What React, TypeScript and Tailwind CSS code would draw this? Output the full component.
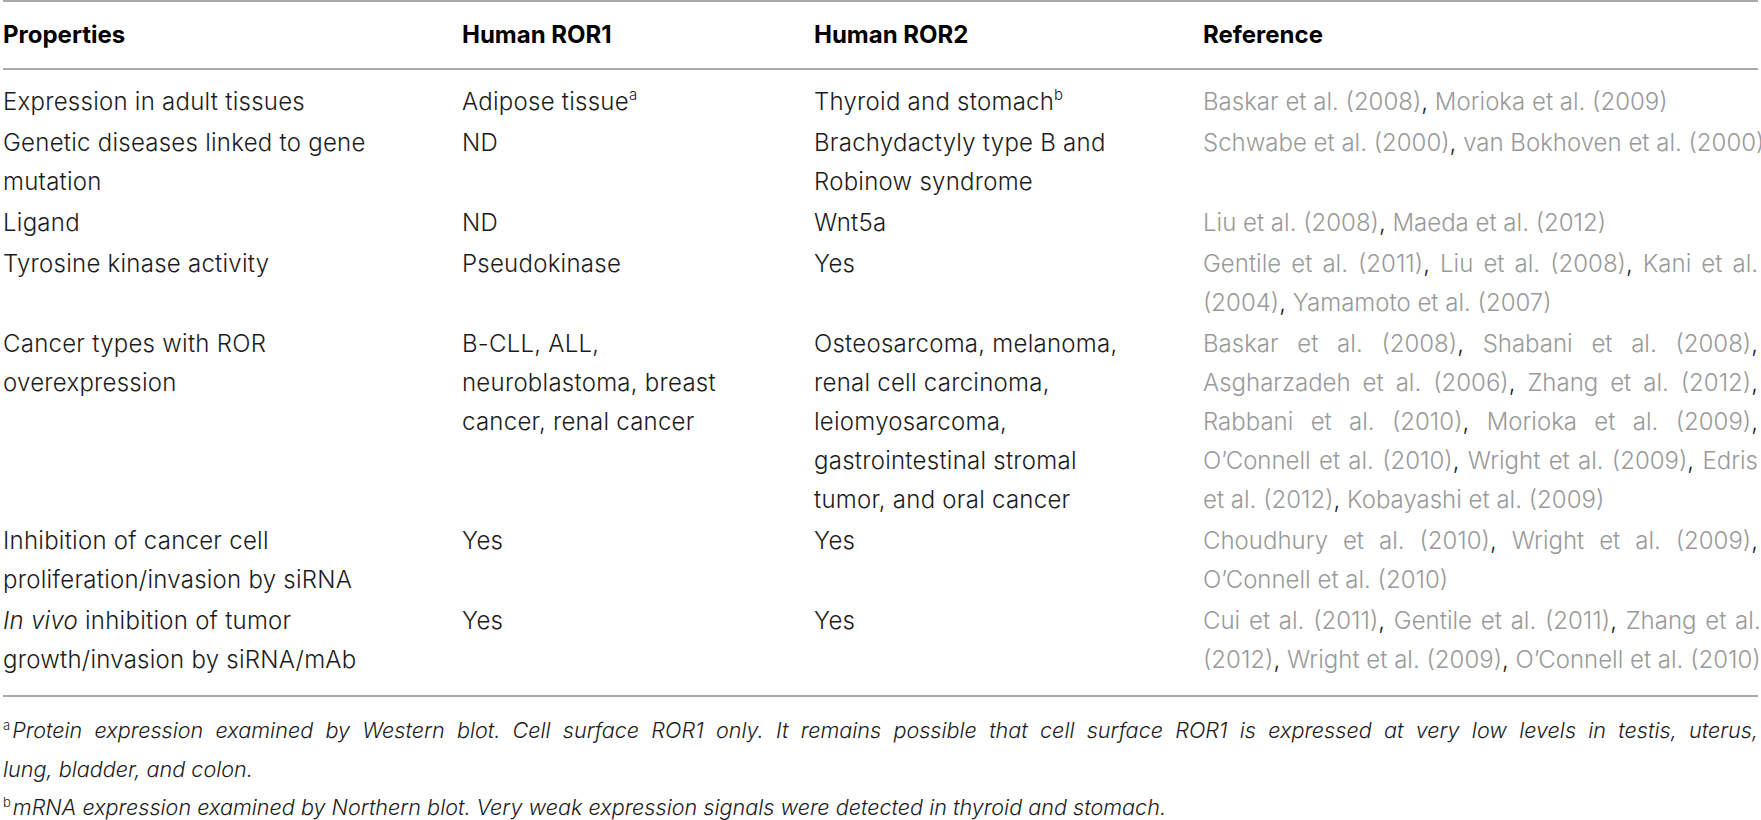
import type { ReactNode } from "react";

type RefLine = { text: string; justify?: boolean };

type Row = {
  property: ReactNode[];
  ror1: ReactNode[];
  ror2: ReactNode[];
  refs: RefLine[];
};

function Sup({ children }: { children: ReactNode }) {
  return <span className="relative -top-[10px] text-[15px] leading-none">{children}</span>;
}

const rows: Row[] = [
  {
    property: ["Expression in adult tissues"],
    ror1: [
      <>
        Adipose tissue<Sup>a</Sup>
      </>,
    ],
    ror2: [
      <>
        Thyroid and stomach<Sup>b</Sup>
      </>,
    ],
    refs: [{ text: "Baskar et al. (2008), Morioka et al. (2009)" }],
  },
  {
    property: ["Genetic diseases linked to gene", "mutation"],
    ror1: ["ND"],
    ror2: ["Brachydactyly type B and", "Robinow syndrome"],
    refs: [{ text: "Schwabe et al. (2000), van Bokhoven et al. (2000)", justify: true }],
  },
  {
    property: ["Ligand"],
    ror1: ["ND"],
    ror2: ["Wnt5a"],
    refs: [{ text: "Liu et al. (2008), Maeda et al. (2012)" }],
  },
  {
    property: ["Tyrosine kinase activity"],
    ror1: ["Pseudokinase"],
    ror2: ["Yes"],
    refs: [
      { text: "Gentile et al. (2011), Liu et al. (2008), Kani et al.", justify: true },
      { text: "(2004), Yamamoto et al. (2007)" },
    ],
  },
  {
    property: ["Cancer types with ROR", "overexpression"],
    ror1: ["B-CLL, ALL,", "neuroblastoma, breast", "cancer, renal cancer"],
    ror2: [
      "Osteosarcoma, melanoma,",
      "renal cell carcinoma,",
      "leiomyosarcoma,",
      "gastrointestinal stromal",
      "tumor, and oral cancer",
    ],
    refs: [
      { text: "Baskar et al. (2008), Shabani et al. (2008),", justify: true },
      { text: "Asgharzadeh et al. (2006), Zhang et al. (2012),", justify: true },
      { text: "Rabbani et al. (2010), Morioka et al. (2009),", justify: true },
      { text: "O\u2019Connell et al. (2010), Wright et al. (2009), Edris", justify: true },
      { text: "et al. (2012), Kobayashi et al. (2009)" },
    ],
  },
  {
    property: ["Inhibition of cancer cell", "proliferation/invasion by siRNA"],
    ror1: ["Yes"],
    ror2: ["Yes"],
    refs: [
      { text: "Choudhury et al. (2010), Wright et al. (2009),", justify: true },
      { text: "O\u2019Connell et al. (2010)" },
    ],
  },
  {
    property: [
      <>
        <i>In vivo</i> inhibition of tumor
      </>,
      "growth/invasion by siRNA/mAb",
    ],
    ror1: ["Yes"],
    ror2: ["Yes"],
    refs: [
      { text: "Cui et al. (2011), Gentile et al. (2011), Zhang et al.", justify: true },
      { text: "(2012), Wright et al. (2009), O\u2019Connell et al. (2010)", justify: true },
    ],
  },
];

function Lines({ lines }: { lines: ReactNode[] }) {
  return (
    <div className="tracking-[0.25px]">
      {lines.map((line, i) => (
        <div key={i} className="whitespace-nowrap">
          {line}
        </div>
      ))}
    </div>
  );
}

function RefText({ text }: { text: string }) {
  const parts = text.split(",");
  return (
    <>
      {parts.map((part, i) => (
        <span key={i}>
          {i > 0 && <span className="text-[#1c1c1c]">,</span>}
          {part}
        </span>
      ))}
    </>
  );
}

export default function App() {
  return (
    <div className="min-h-screen bg-white px-[3px] font-['Inter','Liberation_Sans',sans-serif] text-[24px] leading-[39px] font-light text-[#1c1c1c]">
      <div className="grid grid-cols-[459px_352px_389px_1fr] border-y-2 border-[#a9a9a9] pt-[13px] pb-[14px] font-bold text-black">
        <div>Properties</div>
        <div>Human ROR1</div>
        <div>Human ROR2</div>
        <div>Reference</div>
      </div>

      <div className="flex flex-col gap-[2px] border-b-2 border-[#a9a9a9] pt-[12px] pb-[16px]">
        {rows.map((row, i) => (
          <div key={i} className="grid grid-cols-[459px_352px_389px_1fr]">
            <Lines lines={row.property} />
            <Lines lines={row.ror1} />
            <Lines lines={row.ror2} />
            <div className="text-[#9a9a9a]">
              {row.refs.map((line, j) => (
                <div
                  key={j}
                  className={
                    line.justify
                      ? "whitespace-nowrap text-justify [text-align-last:justify]"
                      : "whitespace-nowrap"
                  }
                >
                  <RefText text={line.text} />
                </div>
              ))}
            </div>
          </div>
        ))}
      </div>

      <div className="pt-[14px] text-[21.6px] leading-[38.5px] italic">
        <div className="whitespace-nowrap text-justify [text-align-last:justify]">
          <span className="relative -top-[8px] mr-[2px] text-[13px] not-italic leading-none">a</span>
          Protein expression examined by Western blot. Cell surface ROR1 only. It remains possible
          that cell surface ROR1 is expressed at very low levels in testis, uterus,
        </div>
        <div>lung, bladder, and colon.</div>
        <div className="whitespace-nowrap">
          <span className="relative -top-[8px] mr-[2px] text-[13px] not-italic leading-none">b</span>
          mRNA expression examined by Northern blot. Very weak expression signals were detected in
          thyroid and stomach.
        </div>
      </div>
    </div>
  );
}
